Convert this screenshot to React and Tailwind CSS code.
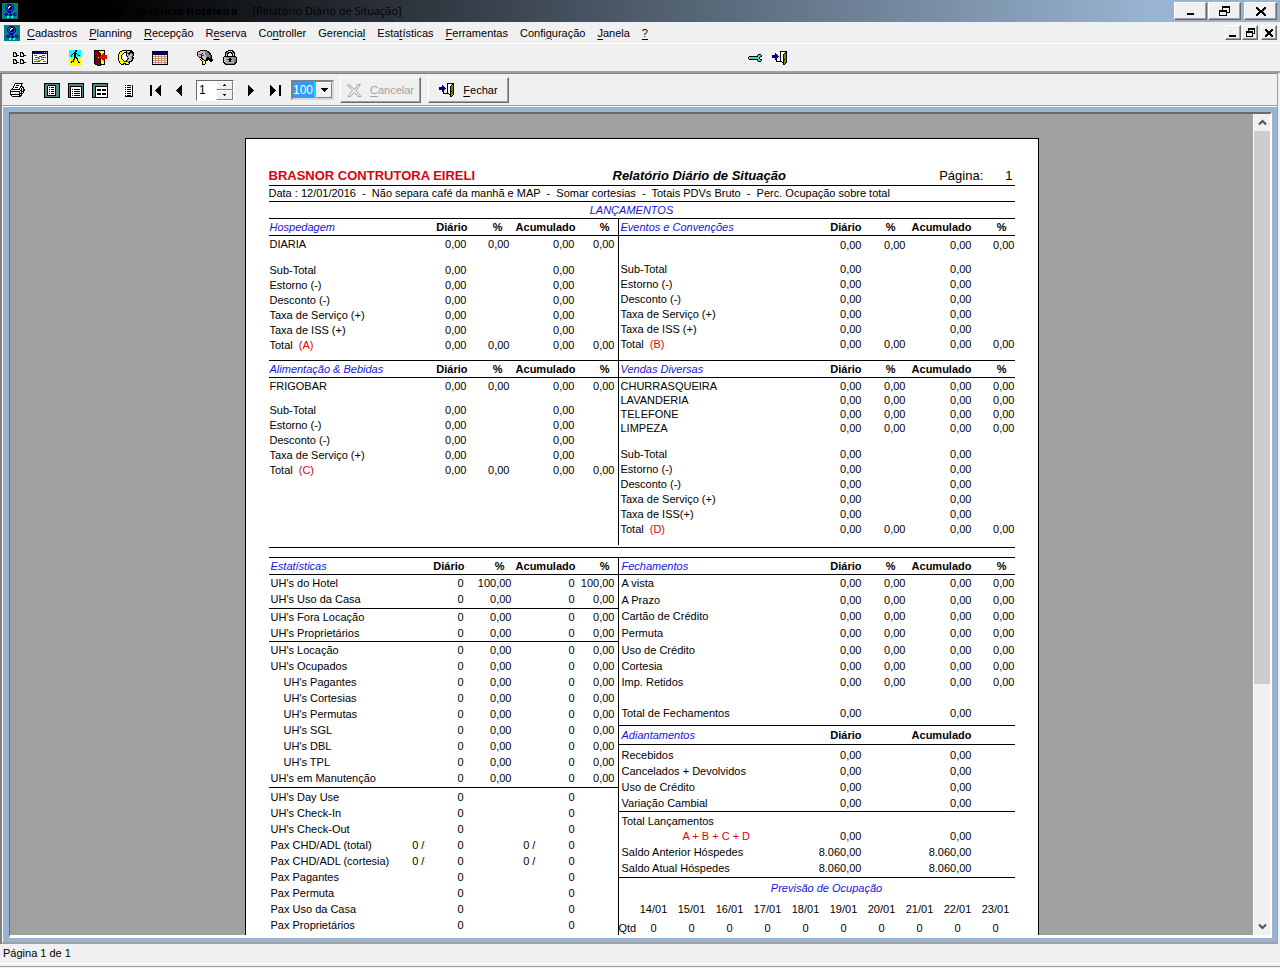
import React from "react";

const PALETTE = {
  k: "#000000", w: "#ffffff", t: "#008080", b: "#000080", B: "#1a3cff", c: "#00ffff",
  y: "#ffff00", r: "#ff0000", m: "#800000", g: "#808080", G: "#c0c0c0", o: "#808000",
  a: "#40d8c8", p: "#c09080", s: "#4a8a86", d: "#404040", f: "#f4f0a0",
};

function Pixels({ rows, className = "" }) {
  const w = Math.max(...rows.map((r) => r.length));
  return (
    <svg
      width={w}
      height={rows.length}
      viewBox={`0 0 ${w} ${rows.length}`}
      shapeRendering="crispEdges"
      aria-hidden="true"
      className={`shrink-0 ${className}`}
    >
      {rows.flatMap((row, y) =>
        [...row].map((c, x) =>
          PALETTE[c] ? <rect key={`${x}-${y}`} x={x} y={y} width="1" height="1" fill={PALETTE[c]} /> : null
        )
      )}
    </svg>
  );
}

const LOGO = [
  "tttttttttttttttt",
  "tttttbbbbbtttttt",
  "ttttbBBkkBbttttt",
  "tttbBBkyykBbtttt",
  "tttbBkyGkkBbtttt",
  "tttbBkGkkkBbtttt",
  "tttbBBkkkBBbtttt",
  "ttttbBBBBBbttttt",
  "tttttbbbbbtttttt",
  "ttttttbbbttttttt",
  "tttbbbttbttbbbtt",
  "ttbBBbtbbbtbBBbt",
  "tttbbttbbbttbbtt",
  "tttttccttccttttt",
  "tttttccttccttttt",
  "tttttttttttttttt",
];
const NODE_GRID = [
  "kkk....kkk.....",
  "kfkk...kfkk....",
  "kffk...kffk....",
  "kffkkk.kffkkk..",
  "kkkk...kkkk....",
  "...............",
  "...............",
  "kkk....kkk.....",
  "kfkk...kfkk....",
  "kffk...kffk....",
  "kffkkk.kffkkk..",
  "kkkk...kkkk....",
];
const CHART = [
  "kkkkkkkkkkkkkkkk",
  "kbbbbbbbbbbbGbGk",
  "kbbbbbbbbbbbbbbk",
  "kwwwwwwwwwwwwwwk",
  "kwtttwwwwwrrrwwk",
  "kwwwwwwrrrwwwwwk",
  "kwwrrrrwwtttttwk",
  "kwwwwwttwwwwwwwk",
  "kwoooowwwrrrwwwk",
  "kwwwwwooowwwwwwk",
  "kwttttttwwwooowk",
  "kwwwwwwwwwwwwwwk",
  "kkkkkkkkkkkkkkkk",
];
const WALK = [
  "cccccckkcccc",
  "cccccckkcccc",
  "ccccckkccccc",
  "cccckkkkcccc",
  "ccckckkckccc",
  "cckcckkcckkc",
  "cckcckkccccc",
  "yyyyykkkyyyy",
  "yyyyykykkyyy",
  "yyyykkyykyyy",
  "yyyykyyykyyy",
  "yykkkyyyykyy",
  "yykyyyyyykky",
  "yyyyyyyyyyyy",
  "yyyyyyyyyyyy",
  "yyyyyyyyyyyy",
];
const DOOR = [
  "kkkkkkkkkkk..",
  "kmmmkyyyyyk..",
  "kmmmmkyyyyk..",
  "kmmmmmkyyrk..",
  "kmmmmmkyrrk..",
  "kmmmmmkrrrrrr",
  "kmmmmmrrrrrrr",
  "kmmmymrrrrrrr",
  "kmmmmmkrrrrrr",
  "kmmmmmkyrrk..",
  "kmmmmmkyyrk..",
  "kmmmmmkyyyk..",
  "kmmmmmkyyyk..",
  "kkmmmmkyyyk..",
  ".kkmmmkkkkk..",
  "...kkkk......",
];
const HEAD = [
  "....kkkkkkkkkk..",
  "..kkyyyykGGGkkk.",
  ".kyyyykkkgGkkkkk",
  ".kyyykwwkgkkggkk",
  "kyyykwwwkGgkGGgk",
  "kyykwwwwkGgGGGgk",
  "kyykwwwwGkGGGgk.",
  "kyykwwwwwgGGGgkk",
  "kyykwwwwwgkGGGkk",
  "kyyykwwwwkGGGgk.",
  "kyyyykwwkgGGGkk.",
  ".kyyyykkkgGkkk..",
  ".kyyyyyyyykk....",
  "..kyykkkyyyk....",
  "...kkk.kkkk.....",
];
const CALENDAR = [
  "kkkkkkkkkkkkkkkk",
  "kbbbbbbbbbbbbbbk",
  "kbbbbbbbbbbbbbbk",
  "kkkkkkkkkkkkkkkk",
  "kwwpwwpwwpwwpwwk",
  "kppppppppppppppk",
  "kwwpwwpwwpwwpwwk",
  "kppppppppppppppk",
  "kwwpwwpwwpwwpwwk",
  "kppppppppppppppk",
  "kwwpwwpwwpwwpwwk",
  "kppppppppppppppk",
  "kwwpwwpwwpwwppwk",
  "kkkkkkkkkkkkkkkk",
];
const MAILBOX = [
  "...kkkkkkk......",
  ".kkGGGGGggkk....",
  "kGGGGGGGgggkk...",
  "kGGGGkGGggggkk..",
  "kGrrkGGGggggdk..",
  "kGGGkrrGGggggdk.",
  ".kGGkGGGGggggdk.",
  "..kkkGGGGgkkgdk.",
  "....kkGGGkkkkdk.",
  "...k.kkGGkkkkkkk",
  "....kyykkkk.kkkk",
  ".....kyyk....kk.",
  ".....kyyk.......",
  ".....kyyk.......",
  ".....kkk........",
];
const LOCK = [
  ".....kkkkk....",
  "...kkGGGGkk...",
  "..kkGkkkkGkk..",
  "..kGkk..kkGk..",
  "..kGk....kGk..",
  "..kGk....kGk..",
  ".kkkkkkkkkkkk.",
  "kGGggggggggggk",
  "kGGGGGkkGGGggk",
  "kGGggkkkkggggk",
  "kGGGGGkkGGGggk",
  "kGGgggkkgggggk",
  "kkGGGGGGGGGgkk",
  ".kkggggggggkk.",
  "..kkkkkkkkkk..",
];
const WRENCH = [
  "..........kkk..",
  ".........kaaak.",
  ".kkkkkkkkkaakk.",
  "kaaaaaaaaaak...",
  "kwaaaaaaaaak...",
  ".kkkkkkkkkaakk.",
  ".........kaaak.",
  "..........kkk..",
];
const EXIT = [
  "........kkkkkkk.",
  "........kwwwwkk.",
  "...b....kwwwkok.",
  "...bb...kwwkook.",
  "bbbbbb..kwwkook.",
  "bbbbbbb.kwwkook.",
  "bbbbbb..kwwkook.",
  "...bb...kwwkook.",
  "...bk...kwwkkok.",
  "....k...kwwkook.",
  "....kkkkkkwkook.",
  "..........kkook.",
  "...........kok..",
  "...........kk...",
];
const PRINTER = [
  ".....kkkkkkkk...",
  "....kwwwwwwk....",
  "....kwkkkwwk....",
  "...kwwwwwwkkk...",
  "...kwkkkwwkwkk..",
  "..kwwwwwwkwkwk..",
  ".kkkkkkkkkwkwkk.",
  "kwwwwwwwwwkkwkk.",
  "kkkkkkkkkkwkkk..",
  "kwwwwwwwwkwkwk..",
  "kwwwwyywwkkkk...",
  "kkkkkkkkkkwk....",
  ".kwwwwwwwkkk....",
  "..kkkkkkkkk.....",
];
const VIEW_PAGE = [
  "kkkkkkkkkkkkkkkk",
  "kssssssssssssssk",
  "kssskkkkkkkksssk",
  "ksskwwwwwwwksssk",
  "ksskwkwkkkwksssk",
  "ksskwwwwwwwksssk",
  "ksskwkwkkkwksssk",
  "ksskwwwwwwwksssk",
  "ksskwkwkkkwksssk",
  "ksskwwwwwwwksssk",
  "ksskwkwkkkwksssk",
  "ksskwwwwwwwksssk",
  "ksskkkkkkkkksssk",
  "kssssssssssssssk",
  "kkkkkkkkkkkkkkkk",
];
const VIEW_WIDTH = [
  "kkkkkkkkkkkkkkkk",
  "kssssssssssssssk",
  "kssssssssssssssk",
  "kskkkkkkkkkkkksk",
  "kskwwwwwwwwwwksk",
  "kskwwwwwwwwwwksk",
  "kskwkwkkkkkkwksk",
  "kskwwwwwwwwwwksk",
  "kskwkwkkkkkkwksk",
  "kskwwwwwwwwwwksk",
  "kskwkwkkkkkkwksk",
  "kskwwwwwwwwwwksk",
  "kskwkwkkkkkkwksk",
  "kskwwwwwwwwwwksk",
  "kkkkkkkkkkkkkkkk",
];
const VIEW_ZOOM = [
  "kkkkkkkkkkkkkkkk",
  "kssssssssssssssk",
  "kssssssssssssssk",
  "ksskkkkkkkkkkkkk",
  "ksskwwwwwwwwwwwk",
  "ksskwwwwwwwwwwwk",
  "ksskwkkkkwkkkkwk",
  "ksskwkkkkwkkkkwk",
  "ksskwwwwwwwwwwwk",
  "ksskwwwwwwwwwwwk",
  "ksskwkkkkwkkkkwk",
  "ksskwkkkkwkkkkwk",
  "ksskwwwwwwwwwwwk",
  "ksskwwwwwwwwwwwk",
  "kkkkkkkkkkkkkkkk",
];
const LIST = [
  "wwwwwwwww",
  "wkwkkkkwk",
  "wwwwwwwwk",
  "wkwkkkkwk",
  "wwwwwwwwk",
  "wkwkkkkwk",
  "wwwwwwwwk",
  "wkwkkkkwk",
  "wwwwwwwwk",
  "wkwkkkkwk",
  "wwwwwwwwk",
  "wkwkkkkwk",
  "wkkkkkkkk",
];
const FIRST = [
  "kk........k", "kk.......kk", "kk......kkk", "kk.....kkkk", "kk....kkkkk", "kk...kkkkkk",
  "kk....kkkkk", "kk.....kkkk", "kk......kkk", "kk.......kk", "kk........k",
];
const PREV = FIRST.map((r) => r.slice(5));
const flip = (rows) => rows.map((r) => [...r].reverse().join(""));
const NEXT = flip(PREV);
const LAST = flip(FIRST);
const MINIMIZE = ["........", "........", "........", "........", "........", "........", "kkkkkkk.", "kkkkkkk."];
const RESTORE = [
  "...kkkkkkkk", "...kkkkkkkk", "...k......k", "...k......k", "kkkkkkkk..k", "kkkkkkkk..k",
  "k......kkkk", "k......k...", "k......k...", "kkkkkkkk...",
];
const CLOSE = [
  "kk......kk", "kkk....kkk", ".kkk..kkk.", "..kkkkkk..", "...kkkk...",
  "..kkkkkk..", ".kkk..kkk.", "kkk....kkk", "kk......kk",
];
const RESTORE_S = ["..kkkkkkk", "..kkkkkkk", "..k.....k", "kkkkkkk.k", "kkkkkkk.k", "k.....kkk", "k.....k..", "k.....k..", "kkkkkkk.."];
const CLOSE_S = ["kk....kk", "kkk..kkk", ".kkkkkk.", "..kkkk..", "..kkkk..", ".kkkkkk.", "kkk..kkk", "kk....kk"];
const UP = ["..k..", ".kkk."];
const DOWN = [".kkk.", "..k.."];
const DROP = ["kkkkkkk", ".kkkkk.", "..kkk..", "...k..."];

const BEVEL = "border border-t-white border-l-white border-r-[#696969] border-b-[#696969] bg-[#f0f0f0] shadow-[inset_-1px_-1px_0_#a0a0a0]";
const SMALL_BEVEL = "border border-t-white border-l-white border-r-[#808080] border-b-[#808080] bg-[#f0f0f0]";

function IconButton({ label, rows, className = "" }) {
  return (
    <button type="button" aria-label={label} className={`flex shrink-0 items-center justify-center ${className}`}>
      <Pixels rows={rows} />
    </button>
  );
}

function Mnemonic({ text }) {
  const i = text.indexOf("&");
  if (i < 0) return text;
  return (
    <>
      {text.slice(0, i)}
      <span className="underline underline-offset-2">{text[i + 1]}</span>
      {text.slice(i + 2)}
    </>
  );
}

const MENUS = ["&Cadastros", "&Planning", "&Recepção", "R&eserva", "Co&ntroller", "Gerencia&l", "Esta&tísticas", "&Ferramentas", "Confi&guração", "&Janela", "&?"];

function TitleBar() {
  return (
    <header className="flex h-[22px] shrink-0 items-center bg-linear-to-r/srgb from-black from-8% to-[#99b4d1] to-90% pr-[3px] pl-[2px]">
      <Pixels rows={LOGO} />
      <h1 className="ml-1 flex-1 whitespace-pre font-['Open_Sans',sans-serif] text-[11px] leading-[22px] text-black">
        <b>Hotel Desbravador - Gerência Hoteleira</b>
        {"   - [Relatório Diário de Situação]"}
      </h1>
      <IconButton label="Minimizar" rows={MINIMIZE} className={`h-[18px] w-[33px] ${BEVEL}`} />
      <IconButton label="Restaurar" rows={RESTORE} className={`ml-px h-[18px] w-[33px] ${BEVEL}`} />
      <IconButton label="Fechar janela" rows={CLOSE} className={`ml-[3px] h-[18px] w-[33px] ${BEVEL}`} />
    </header>
  );
}

function MenuBar() {
  return (
    <nav className="flex h-[22px] shrink-0 items-center border-b border-white pr-[3px] pl-1">
      <Pixels rows={LOGO} />
      <div className="ml-[7px] flex flex-1 gap-3">
        {MENUS.map((m) => (
          <button key={m} type="button" className="whitespace-nowrap leading-4">
            <Mnemonic text={m} />
          </button>
        ))}
      </div>
      <IconButton label="Minimizar relatório" rows={MINIMIZE} className={`h-[15px] w-4 ${BEVEL}`} />
      <IconButton label="Restaurar relatório" rows={RESTORE_S} className={`ml-px h-[15px] w-4 ${BEVEL}`} />
      <IconButton label="Fechar relatório" rows={CLOSE_S} className={`ml-[3px] h-[15px] w-4 ${BEVEL}`} />
    </nav>
  );
}

function MainToolbar() {
  return (
    <div className="flex h-[29px] shrink-0 items-center border-b-2 border-[#a0a0a0] pl-3">
      <IconButton label="Mapa" rows={NODE_GRID} className="h-5 w-4" />
      <IconButton label="Gráfico" rows={CHART} className="ml-1 h-5 w-4" />
      <IconButton label="Check-in" rows={WALK} className="ml-[19px] h-5 w-4" />
      <IconButton label="Check-out" rows={DOOR} className="ml-[9px] h-5 w-4" />
      <IconButton label="Hóspedes" rows={HEAD} className="ml-[10px] h-5 w-4" />
      <IconButton label="Calendário" rows={CALENDAR} className="ml-[18px] h-5 w-4" />
      <IconButton label="Correio" rows={MAILBOX} className="ml-[29px] h-5 w-4" />
      <IconButton label="Bloquear" rows={LOCK} className="ml-[9px] h-5 w-4" />
      <IconButton label="Ferramentas" rows={WRENCH} className="ml-[509px] h-5 w-4" />
      <IconButton label="Sair" rows={EXIT} className="ml-[9px] h-5 w-4" />
    </div>
  );
}

function PreviewToolbar() {
  return (
    <div className="flex h-[31px] shrink-0 items-center pt-px pl-2">
      <IconButton label="Imprimir" rows={PRINTER} className="h-5 w-4" />
      <IconButton label="Página inteira" rows={VIEW_PAGE} className="ml-[18px] h-5 w-4" />
      <IconButton label="Largura da página" rows={VIEW_WIDTH} className="ml-2 h-5 w-4" />
      <IconButton label="Ampliação" rows={VIEW_ZOOM} className="ml-2 h-5 w-4" />
      <IconButton label="Lista" rows={LIST} className="ml-3 h-5 w-4" />
      <IconButton label="Primeira página" rows={FIRST} className="ml-[11px] h-5 w-4" />
      <IconButton label="Página anterior" rows={PREV} className="ml-2 h-5 w-4" />
      <div className="ml-[9px] flex h-[21px] w-[38px] border border-t-[#696969] border-r-white border-b-white border-l-[#696969] bg-white">
        <input aria-label="Página" defaultValue="1" className="w-[19px] min-w-0 bg-white pl-[2px] text-[12px] leading-4 outline-none" />
        <div className="flex flex-1 flex-col">
          <IconButton label="Aumentar" rows={UP} className={`min-h-0 flex-1 ${SMALL_BEVEL}`} />
          <IconButton label="Diminuir" rows={DOWN} className={`min-h-0 flex-1 ${SMALL_BEVEL}`} />
        </div>
      </div>
      <IconButton label="Próxima página" rows={NEXT} className="ml-[9px] h-5 w-4" />
      <IconButton label="Última página" rows={LAST} className="ml-2 h-5 w-4" />
      <div className="ml-2 flex h-[20px] w-[43px] border-2 border-t-[#808080] border-r-[#d8d8d8] border-b-[#d8d8d8] border-l-[#808080] bg-white">
        <select aria-label="Zoom" className="w-[23px] appearance-none border-r-2 border-[#00e0ff] bg-[#3399ff] text-[12px] leading-4 text-white outline-none">
          <option>100</option>
        </select>
        <span aria-hidden="true" className={`flex flex-1 items-center justify-center ${SMALL_BEVEL}`}>
          <Pixels rows={DROP} />
        </span>
      </div>
      <button type="button" disabled className={`ml-[6px] flex h-[26px] w-[81px] items-center justify-center gap-2 text-[#a0a0a0] ${BEVEL}`}>
        <svg width="15" height="15" viewBox="0 0 15 15" fill="none" stroke="#a0a0a0" aria-hidden="true">
          <path d="M2 1.5 7.5 6.5 11 1.5H13.5L9 7.5 14 13.5H11L7.5 9.5 3.5 13.5H1L5.5 7.5 .5 2Z" />
        </svg>
        <span><Mnemonic text="&Cancelar" /></span>
      </button>
      <button type="button" className={`ml-[7px] flex h-[26px] w-[81px] items-center justify-center gap-2 ${BEVEL}`}>
        <Pixels rows={EXIT} />
        <span><Mnemonic text="&Fechar" /></span>
      </button>
    </div>
  );
}

const LEFT_COLS = ["w-auto", "w-[60px]", "w-[43px]", "w-[65px]", "w-[40px]"];
const STAT_COLS = ["w-auto", "w-[70px]", "w-[48px]", "w-[63px]", "w-[40px]"];
const RIGHT_COLS = ["w-auto", "w-[60px]", "w-[44px]", "w-[66px]", "w-[43px]"];

const Z = "0,00";
const full = (label, h, opts = {}) => ({ label, cells: [Z, Z, Z, Z], h, ...opts });
const half = (label, h, opts = {}) => ({ label, cells: [Z, "", Z, ""], h, ...opts });
const gap = (h) => ({ gap: true, h });

function Section({ title, cols, right = false, percent = true, headClass = "h-[17px]", labelPad = "pl-[2px]", rows }) {
  const cellPad = right ? "pr-0" : "pr-[3px]";
  const headPad = right ? "pr-0" : "pr-[2px]";
  return (
    <table className="w-full table-fixed border-separate border-spacing-0">
      <colgroup>
        {cols.map((c, i) => <col key={i} className={c} />)}
      </colgroup>
      <thead>
        <tr className={`${headClass} *:border-b *:border-black *:p-0`}>
          <th scope="col" className="text-left font-normal whitespace-nowrap text-[#1414dc] italic">
            <span className={labelPad}>{title}</span>
          </th>
          <th scope="col" className="text-right"><span className={headPad}>Diário</span></th>
          <th scope="col" className="text-right"><span className="pr-2.5">{percent ? "%" : ""}</span></th>
          <th scope="col" className="text-right"><span className={headPad}>Acumulado</span></th>
          <th scope="col" className="text-right"><span className="pr-2">{percent ? "%" : ""}</span></th>
        </tr>
      </thead>
      <tbody>
        {rows.map((row, i) =>
          row.gap ? (
            <tr key={i} aria-hidden="true">
              <td colSpan={5} className={`p-0 ${row.h}`} />
            </tr>
          ) : (
            <tr key={i} className={row.line ? "*:border-b *:border-black" : ""}>
              <th scope="row" className={`p-0 text-left font-normal whitespace-nowrap ${row.indent ? "pl-[15px]" : labelPad} ${row.h}`}>
                {row.red ? <span className="pl-[61px] text-[#e00010]">{row.red}</span> : row.label}
                {row.mark && <span className="pl-[6px] text-[#e00010]">{row.mark}</span>}
              </th>
              {row.cells.map((c, j) => (
                <td key={j} className={`p-0 text-right whitespace-nowrap ${cellPad}`}>
                  {row.children && c ? <span className="pr-[33px]">0 /</span> : null}
                  {c}
                </td>
              ))}
            </tr>
          )
        )}
      </tbody>
    </table>
  );
}

const H14 = "h-[14px]", H15 = "h-[15px]", H16 = "h-[16px]", H17 = "h-[17px]", H18 = "h-[18px]";

const hospedagem = [
  full("DIARIA", H17), gap("h-[10px]"),
  half("Sub-Total", H15), half("Estorno (-)", H15), half("Desconto (-)", H15),
  half("Taxa de Serviço (+)", H15), half("Taxa de ISS (+)", H15), full("Total", H15, { mark: "(A)" }),
];
const eventos = [
  full("", H18), gap("h-[8px]"),
  half("Sub-Total", H15), half("Estorno (-)", H15), half("Desconto (-)", H15),
  half("Taxa de Serviço (+)", H15), half("Taxa de ISS (+)", H15), full("Total", H15, { mark: "(B)" }),
];
const alimentacao = [
  full("FRIGOBAR", H17), gap("h-[8px]"),
  half("Sub-Total", H15), half("Estorno (-)", H15), half("Desconto (-)", H15),
  half("Taxa de Serviço (+)", H15), full("Total", H15, { mark: "(C)" }),
];
const vendas = [
  gap("h-px"),
  full("CHURRASQUEIRA", H14), full("LAVANDERIA", H14), full("TELEFONE", H14), full("LIMPEZA", H14), gap("h-[12px]"),
  half("Sub-Total", H15), half("Estorno (-)", H15), half("Desconto (-)", H15),
  half("Taxa de Serviço (+)", H15), half("Taxa de ISS(+)", H15), full("Total", H15, { mark: "(D)" }),
];
const count = (label, h, opts = {}) => ({ label, cells: ["0", "", "0", ""], h, ...opts });
const estatisticas = [
  { label: "UH's do Hotel", cells: ["0", "100,00", "0", "100,00"], h: H16 },
  ...[
    ["UH's Uso da Casa", H18, { line: true }],
    ["UH's Fora Locação", H16],
    ["UH's Proprietários", H17, { line: true }],
    ["UH's Locação", H16],
    ["UH's Ocupados", H16],
    ["UH's Pagantes", H16, { indent: true }],
    ["UH's Cortesias", H16, { indent: true }],
    ["UH's Permutas", H16, { indent: true }],
    ["UH's SGL", H16, { indent: true }],
    ["UH's DBL", H16, { indent: true }],
    ["UH's TPL", H16, { indent: true }],
    ["UH's em Manutenção", H18, { line: true }],
  ].map(([label, h, o]) => ({ label, h, cells: ["0", Z, "0", Z], ...o })),
  gap("h-px"),
  count("UH's Day Use", H16), count("UH's Check-In", H16), count("UH's Check-Out", H16),
  count("Pax CHD/ADL (total)", H16, { children: true }), count("Pax CHD/ADL (cortesia)", H16, { children: true }),
  count("Pax Pagantes", H16), count("Pax Permuta", H16), count("Pax Uso da Casa", H16), count("Pax Proprietários", H16),
];
const fechamentos = [
  full("A vista", H17), full("A Prazo", H16), full("Cartão de Crédito", H17), full("Permuta", H17),
  full("Uso de Crédito", H16), full("Cortesia", H16), full("Imp. Retidos", H16), gap("h-[16px]"),
  half("Total de Fechamentos", H15), gap("h-[5px] border-b border-black"),
];
const adiantamentos = [
  gap("h-[2px]"),
  half("Recebidos", H16), half("Cancelados + Devolvidos", H16), half("Uso de Crédito", H16),
  half("Variação Cambial", H17, { line: true }), gap("h-[2px]"),
  { label: "Total Lançamentos", cells: ["", "", "", ""], h: H15 },
  half("", H15, { red: "A + B + C + D" }),
  { label: "Saldo Anterior Hóspedes", cells: ["8.060,00", "", "8.060,00", ""], h: H16 },
  { label: "Saldo Atual Hóspedes", cells: ["8.060,00", "", "8.060,00", ""], h: H18, line: true },
];
const DAYS = ["14/01", "15/01", "16/01", "17/01", "18/01", "19/01", "20/01", "21/01", "22/01", "23/01"];

function Forecast() {
  return (
    <table className="w-full table-fixed border-separate border-spacing-0">
      <caption className="h-[21px] pl-5 leading-[21px] text-[#1414dc] italic">Previsão de Ocupação</caption>
      <thead>
        <tr className="h-[20px]">
          <th className="w-[16px] p-0" />
          {DAYS.map((d) => <th key={d} scope="col" className="p-0 font-normal">{d}</th>)}
        </tr>
      </thead>
      <tbody>
        <tr className="h-[18px]">
          <th scope="row" className="p-0 text-left font-normal">Qtd</th>
          {DAYS.map((d) => <td key={d} className="p-0 text-center">0</td>)}
        </tr>
      </tbody>
    </table>
  );
}

function Report() {
  const pair = "grid grid-cols-[349px_1fr]";
  return (
    <article className="w-[794px] shrink-0 border border-black bg-white px-[23px] pt-[27px] pb-16 text-black">
      <div className="grid h-[20px] grid-cols-[344px_1fr_auto_auto] items-center border-b border-black text-[13px] leading-[19px]">
        <span className="font-bold text-[#e00010]">BRASNOR CONTRUTORA EIRELI</span>
        <h2 className="font-bold italic">Relatório Diário de Situação</h2>
        <span>Página:</span>
        <span className="pr-[2px] pl-[22px]">1</span>
      </div>
      <p className="h-[16px] border-b border-black leading-[15px] whitespace-pre">
        {"Data : 12/01/2016  -  Não separa café da manhã e MAP  -  Somar cortesias  -  Totais PDVs Bruto  -  Perc. Ocupação sobre total"}
      </p>
      <h3 className="h-[17px] border-b border-black pr-5 text-center leading-[16px] text-[#1414dc] italic">LANÇAMENTOS</h3>
      <div className={`${pair} border-b border-black`}>
        <div className="pb-[7px]"><Section title="Hospedagem" cols={LEFT_COLS} labelPad="pl-px" rows={hospedagem} /></div>
        <div className="border-l border-black"><Section title="Eventos e Convenções" cols={RIGHT_COLS} right rows={eventos} /></div>
      </div>
      <div className={pair}>
        <div><Section title="Alimentação & Bebidas" cols={LEFT_COLS} labelPad="pl-px" rows={alimentacao} /></div>
        <div className="border-l border-black pb-2"><Section title="Vendas Diversas" cols={RIGHT_COLS} right rows={vendas} /></div>
      </div>
      <div className="mt-0.5 h-[11px] border-y border-black" />
      <div className={pair}>
        <div><Section title="Estatísticas" cols={STAT_COLS} rows={estatisticas} /></div>
        <div className="border-l border-black">
          <Section title="Fechamentos" cols={RIGHT_COLS} right labelPad="pl-[3px]" rows={fechamentos} />
          <Section title="Adiantamentos" cols={RIGHT_COLS} right labelPad="pl-[3px]" percent={false} headClass="h-[19px]" rows={adiantamentos} />
          <Forecast />
        </div>
      </div>
    </article>
  );
}

function Chevron({ up = false }) {
  return (
    <svg width="9" height="7" viewBox="0 0 9 7" fill="none" stroke="#505050" strokeWidth="2" aria-hidden="true">
      <path d={up ? "M1 5.5 4.5 2 8 5.5" : "M1 1.5 4.5 5 8 1.5"} />
    </svg>
  );
}

function Viewer() {
  return (
    <main className="flex min-h-0 flex-1 border-t border-b-2 border-l border-t-white border-b-[#a0a0a0] border-l-white">
      <div className="flex min-w-0 flex-1 border-t-[5px] border-r-[5px] border-b-4 border-l-[6px] border-[#99b4d1]">
        <div className="flex min-w-0 flex-1 border-t-2 border-r-2 border-b-[3px] border-l border-t-[#696969] border-r-white border-b-white border-l-[#696969]">
          <div className="flex min-w-0 flex-1 items-start justify-center overflow-hidden bg-[#a0a0a0] pt-6 pl-5">
            <Report />
          </div>
          <div className="flex w-[17px] shrink-0 flex-col items-center border-l border-white bg-[#f0f0f0]">
            <button type="button" aria-label="Rolar para cima" className="flex h-[17px] w-full items-center justify-center"><Chevron up /></button>
            <div className="w-full flex-[552] bg-[#cdcdcd]" />
            <div className="w-full flex-[234]" />
            <button type="button" aria-label="Rolar para baixo" className="flex h-[17px] w-full items-center justify-center"><Chevron /></button>
          </div>
        </div>
      </div>
    </main>
  );
}

export default function App() {
  return (
    <div className="flex h-screen flex-col overflow-hidden bg-[#f0f0f0] font-['Liberation_Sans',Arial,sans-serif] text-[11px] leading-[13px] text-black">
      <TitleBar />
      <MenuBar />
      <MainToolbar />
      <div className="mr-0.5 flex min-h-0 flex-1 flex-col border-t border-r border-l-2 border-[#808080] border-r-[#a0a0a0]">
        <PreviewToolbar />
        <div className="h-px shrink-0 bg-[#a0a0a0]" />
        <Viewer />
      </div>
      <footer className="flex h-6 shrink-0 flex-col">
        <div className="h-[20px] border-b border-white pl-[3px] leading-[19px]">Página 1 de 1</div>
        <div className="mt-0.5 h-px bg-[#a0a0a0]" />
      </footer>
    </div>
  );
}
